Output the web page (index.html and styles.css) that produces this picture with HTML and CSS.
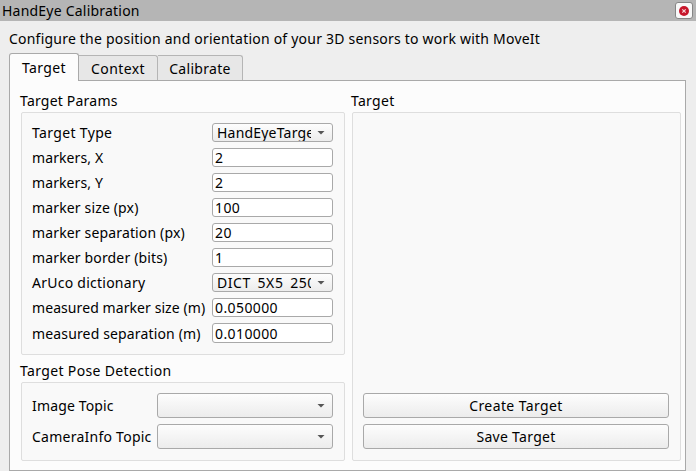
FILE: index.html
```
<!DOCTYPE html>
<html lang="en">
<head>
<meta charset="utf-8">
<title>HandEye Calibration</title>
<link rel="stylesheet" href="styles.css">
</head>
<body>
<header class="titlebar"><span class="t-title">HandEye Calibration</span>
<button class="close" aria-label="Close"><svg width="10" height="10" viewBox="0 0 10 10"><circle cx="5" cy="5" r="5" fill="#c7162b"/><path d="M3.3 3.3l3.4 3.4M6.7 3.3l-3.4 3.4" stroke="#f6d5d9" stroke-width="1.2"/></svg></button></header>
<p class="intro"><span class="t-intro">Configure the position and orientation of your 3D sensors to work with MoveIt</span></p>
<nav class="tabs"><div class="tab active"><span class="t-tab1">Target</span></div><div class="tab context"><span class="t-tab2">Context</span></div><div class="tab calibrate"><span class="t-tab3">Calibrate</span></div></nav>
<main class="pane">
<section class="left">
<h2><span class="t-params">Target Params</span></h2>
<div class="group params">
<div class="row"><label><span class="t-type">Target Type</span></label><div class="combo small"><span class="value">HandEyeTarget_Aruco</span><i class="arrow"></i></div></div>
<div class="row"><label><span class="t-mx">markers, X</span></label><div class="field">2</div></div>
<div class="row"><label><span class="t-my">markers, Y</span></label><div class="field">2</div></div>
<div class="row"><label><span class="t-size">marker size (px)</span></label><div class="field"><span class="num">100</span></div></div>
<div class="row"><label><span class="t-sep">marker separation (px)</span></label><div class="field"><span class="num">20</span></div></div>
<div class="row"><label><span class="t-border">marker border (bits)</span></label><div class="field">1</div></div>
<div class="row"><label><span class="t-dict">ArUco dictionary</span></label><div class="combo small"><span class="value dict">DICT_5X5_250</span><i class="arrow"></i></div></div>
<div class="row"><label><span class="t-msize">measured marker size (m)</span></label><div class="field"><span class="num">0.050000</span></div></div>
<div class="row last"><label><span class="t-msep">measured separation (m)</span></label><div class="field"><span class="num">0.010000</span></div></div>
</div>
<h2 class="second"><span class="t-pose">Target Pose Detection</span></h2>
<div class="group pose">
<div class="row"><label><span class="t-image">Image Topic</span></label><div class="combo"><i class="arrow"></i></div></div>
<div class="row"><label><span class="t-camera">CameraInfo Topic</span></label><div class="combo"><i class="arrow"></i></div></div>
</div>
</section>
<section class="right">
<h2><span class="t-target">Target</span></h2>
<div class="group target"><button class="push"><span class="t-create">Create Target</span></button><button class="push"><span class="t-save">Save Target</span></button></div>
</section>
</main>
</body>
</html>
```
FILE: styles.css
```
* { box-sizing: border-box; }
html, body { height: 100%; overflow: hidden; }
body { margin: 0; background: #eee; color: #000; font: 14px/20px "Noto Sans", sans-serif; white-space: nowrap; }
.titlebar { height: 21px; background: #b5b5b5; display: flex; justify-content: space-between; padding: 0 3px 0 2px; line-height: 22px; }
.close { width: 18px; height: 17px; margin-top: 2px; padding: 0; border: 1px solid #858585; border-radius: 3px; background: #f8f8f8; display: flex; align-items: center; justify-content: center; }
.intro { margin: 0; padding: 8px 0 0 9px; height: 32px; }
.tabs { display: flex; height: 27px; margin-left: 9px; align-items: flex-end; }
.tab { height: 25px; line-height: 25px; border: 1px solid #b5b5b5; border-left: 0; border-bottom: 0; background: #e7e7e7; text-align: center; border-radius: 0 3px 0 0; }
.tab.active { width: 70px; height: 28px; line-height: 27px; margin-bottom: -1px; background: #fcfcfc; border: 1px solid #a9a9a9; border-bottom: 0; border-radius: 3px 3px 0 0; position: relative; z-index: 1; }
.context { width: 79px; }
.calibrate { width: 85px; }
.pane { width: 677px; height: 391px; margin-left: 9px; border: 1px solid #a9a9a9; background: #fcfcfc; display: flex; gap: 7px; padding: 10px 0 0 11px; }
.left { width: 324px; }
.right { width: 329px; }
h2 { margin: 0 0 1px -1px; height: 20px; font-size: 14px; font-weight: 400; }
h2.second { margin-top: 6px; margin-bottom: 1px; }
.group { border: 1px solid #dedede; border-radius: 2px; background: #f9f9f9; padding: 10px 11px 0 10px; display: flex; flex-direction: column; gap: 6px; }
.params { height: 243px; }
.pose { height: 79px; }
.target { height: 349px; justify-content: flex-end; padding: 0 11px 11px 10px; }
.row { display: flex; justify-content: space-between; height: 19px; }
.row.last { height: 20px; }
.row.last .field { line-height: 20px; }
.row.last label { line-height: 22px; }
label { line-height: 20px; }
.field, .combo { border: 1px solid #a9a9a9; border-radius: 3px; width: 121px; height: 100%; }
.field { background: #fff; padding-left: 2px; line-height: 18px; }
.combo { background: linear-gradient(#fdfdfd, #ececec); width: 176px; display: flex; justify-content: flex-end; align-items: center; padding-right: 7px; }
.small { width: 121px; justify-content: space-between; padding-left: 4px; }
.value { width: 94px; height: 17px; line-height: 18px; overflow: hidden; letter-spacing: .2px; }
.dict { letter-spacing: .55px; clip-path: inset(0 0 2.5px 0); }
.arrow { width: 8px; height: 4px; background: #555; clip-path: polygon(0 0, 100% 0, 50% 100%); }
.pose .row { height: 25px; }
.pose label { line-height: 26px; }
.push { font: inherit; color: #000; height: 25px; padding: 0; line-height: 23px; border: 1px solid #a9a9a9; border-radius: 3px; background: linear-gradient(#fdfdfd, #ececec); }

/* per-label tracking */
.t-title, .t-intro, .t-params { letter-spacing: .215px; }
.t-type, .t-pose { letter-spacing: .35px; }
.t-mx, .t-my { letter-spacing: .1px; }
.t-size, .t-sep, .t-border, .t-msep, .t-image { letter-spacing: .15px; }
.t-dict, .t-camera { letter-spacing: .25px; }
.t-msize { letter-spacing: .08px; }
.t-tab1, .t-tab2, .t-create, .num { letter-spacing: .4px; }
.t-tab3, .t-target, .t-save { letter-spacing: .3px; }
```
